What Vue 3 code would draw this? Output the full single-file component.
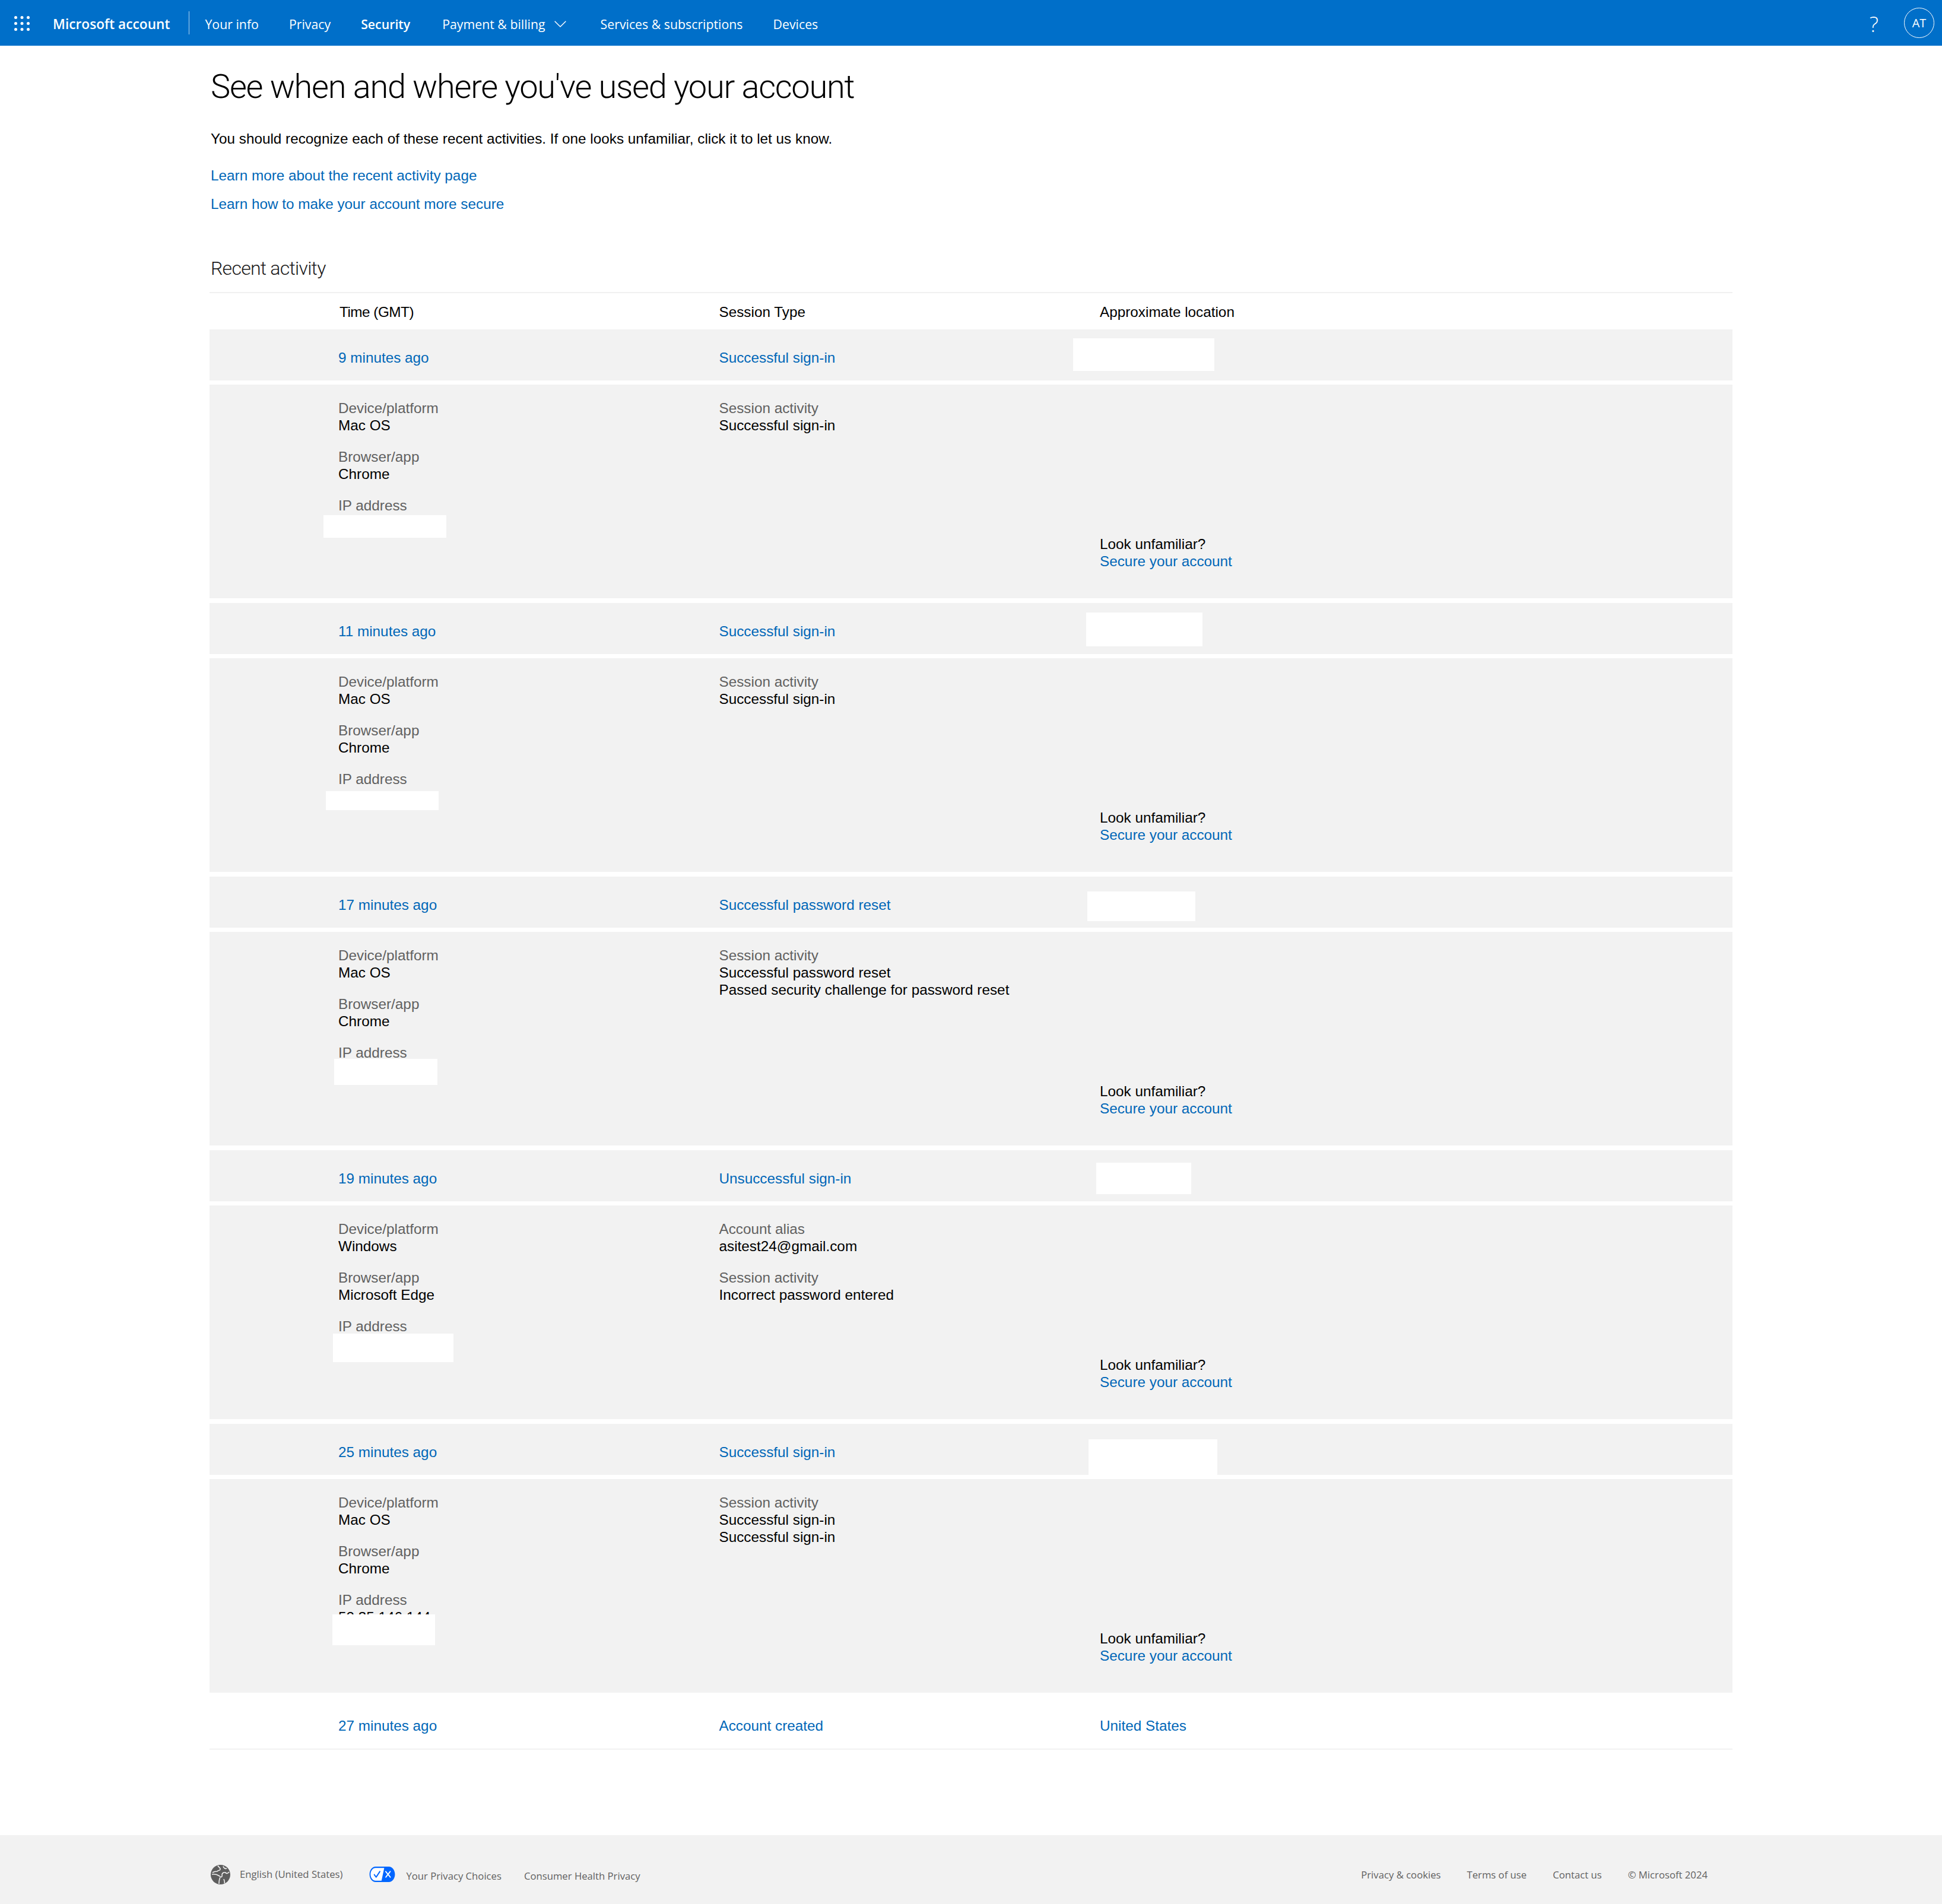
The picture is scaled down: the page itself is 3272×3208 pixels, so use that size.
<template>
  <div class="page">
    <header class="topbar">
      <svg class="waffle" viewBox="0 0 26 25" width="26" height="25" fill="#fff">
        <template v-for="y in [2.5, 12.5, 22.5]" :key="y">
          <circle v-for="x in [2.5, 13, 23.5]" :key="x" :cx="x" :cy="y" r="2.5" />
        </template>
      </svg>
      <span class="brand">Microsoft account</span>
      <span class="divider"></span>
      <nav class="nav">
        <a class="nav-link">Your info</a>
        <a class="nav-link">Privacy</a>
        <a class="nav-link active">Security</a>
        <a class="nav-link billing">
          Payment &amp; billing
          <svg viewBox="0 0 18 10" width="20" height="11" fill="none" stroke="#fff" stroke-width="1.3"><path d="M.5.7 9 9l8.500-8.300" /></svg>
        </a>
        <a class="nav-link services">Services &amp; subscriptions</a>
        <a class="nav-link">Devices</a>
      </nav>
      <span class="help">?</span>
      <span class="avatar">AT</span>
    </header>

    <main class="content">
      <div class="intro">
        <h1>See when and where you've used your account</h1>
        <p class="lead">You should recognize each of these recent activities. If one looks unfamiliar, click it to let us know.</p>
        <a class="link learn-1">Learn more about the recent activity page</a>
        <a class="link learn-2">Learn how to make your account more secure</a>
        <h2>Recent activity</h2>
      </div>

      <div class="table-head">
        <span class="time-head">Time (GMT)</span>
        <span>Session Type</span>
        <span>Approximate location</span>
      </div>

      <section v-for="a in activities" :key="a.time" class="activity">
        <div class="row">
          <a class="link">{{ a.time }}</a>
          <a class="link">{{ a.type }}</a>
        </div>
        <div class="detail">
          <div class="col">
            <div class="group"><div class="label">Device/platform</div><div>{{ a.device }}</div></div>
            <div class="group"><div class="label">Browser/app</div><div>{{ a.browser }}</div></div>
            <div class="group"><div class="label">IP address</div><div>{{ a.ip }}</div></div>
          </div>
          <div class="col">
            <div v-for="g in a.session" :key="g.label" class="group">
              <div class="label">{{ g.label }}</div>
              <div v-for="(v, i) in g.values" :key="i">{{ v }}</div>
            </div>
          </div>
          <div class="unfamiliar">
            <div>Look unfamiliar?</div>
            <a class="link">Secure your account</a>
          </div>
        </div>
        <i v-for="(b, i) in a.masks" :key="i" class="mask" :style="{ left: b[0] + 'px', top: b[1] + 'px', width: b[2] + 'px', height: b[3] + 'px' }"></i>
      </section>

      <div class="row last">
        <a class="link">27 minutes ago</a>
        <a class="link">Account created</a>
        <a class="link">United States</a>
      </div>
    </main>

    <footer class="footer">
      <div class="foot-left">
        <svg class="globe" viewBox="0 0 33 33" width="33" height="33">
          <circle cx="16.5" cy="16.5" r="16.5" fill="#5e5e5e" />
          <g fill="none" stroke="#f2f2f2" stroke-width="1.6">
            <path d="M12 1.5C14 5 17 5 16 8c-1 2-4 1-5 3-3 0-5 0-8 2" />
            <path d="M2 16c6-1 10 1 13 3 3 3 5 1 4-2 0-3 3-5 6-4 2 3 4 1 6-1" />
            <path d="M21 2.500c1 3.500 4 4.500 6 3.500" />
            <path d="M16 21c-2 4-2 7-2 11" />
            <path d="M22 24c1 3 2 4 1 7" />
          </g>
        </svg>
        <span class="lang">English (United States)</span>
        <svg class="choices" viewBox="0 0 30 14" width="44" height="26" preserveAspectRatio="none">
          <path fill="#fff" d="M7.4 12.8h6.8l3.1-11.6H7.4C4.2 1.2 1.6 3.8 1.6 7s2.6 5.8 5.8 5.8z" />
          <path fill="#06f" d="M22.6 0H7.4c-3.9 0-7 3.1-7 7s3.1 7 7 7h15.2c3.9 0 7-3.1 7-7s-3.2-7-7-7zm-21 7c0-3.2 2.6-5.8 5.8-5.8h9.9l-3.1 11.6H7.4c-3.2 0-5.8-2.6-5.8-5.8z" />
          <path fill="#fff" d="M24.6 4c.2.2.2.6 0 .8L22.5 7l2.2 2.2c.2.2.2.6 0 .8-.2.2-.6.2-.8 0l-2.2-2.2L19.5 10c-.2.2-.6.2-.8 0-.2-.2-.2-.6 0-.8L20.8 7l-2.2-2.2c-.2-.2-.2-.6 0-.8.2-.2.6-.2.8 0l2.2 2.2L23.8 4c.2-.2.6-.2.8 0z" />
          <path fill="#06f" d="M12.7 4.1c.2.2.3.6.1.8L8.6 9.8c-.1.1-.2.2-.3.2-.2.1-.5.1-.7-.1L5.4 7.7c-.2-.2-.2-.6 0-.8.2-.2.6-.2.8 0L8 8.6l3.8-4.5c.2-.2.6-.2.9 0z" />
        </svg>
        <a class="foot-low">Your Privacy Choices</a>
        <a class="foot-low consumer">Consumer Health Privacy</a>
      </div>
      <div class="foot-right">
        <a>Privacy &amp; cookies</a>
        <a>Terms of use</a>
        <a>Contact us</a>
        <span>© Microsoft 2024</span>
      </div>
    </footer>
  </div>
</template>

<script setup>
const signIn = [{ label: 'Session activity', values: ['Successful sign-in'] }]
// masks: left, top, width, height, measured from the top left of each activity
const activities = [
  { time: '9 minutes ago', type: 'Successful sign-in', device: 'Mac OS', browser: 'Chrome', ip: '52.35.146.144', session: signIn,
    masks: [[1455, 15, 238, 55], [192, 313, 207, 38]] },
  { time: '11 minutes ago', type: 'Successful sign-in', device: 'Mac OS', browser: 'Chrome', ip: '52.35.146.144', session: signIn,
    masks: [[1477, 16, 196, 57], [196, 317, 190, 32]] },
  { time: '17 minutes ago', type: 'Successful password reset', device: 'Mac OS', browser: 'Chrome', ip: '52.35.146.144',
    session: [{ label: 'Session activity', values: ['Successful password reset', 'Passed security challenge for password reset'] }],
    masks: [[1479, 25, 182, 50], [210, 307, 174, 44]] },
  { time: '19 minutes ago', type: 'Unsuccessful sign-in', device: 'Windows', browser: 'Microsoft Edge', ip: '52.35.146.144',
    session: [{ label: 'Account alias', values: ['asitest24@gmail.com'] }, { label: 'Session activity', values: ['Incorrect password entered'] }],
    masks: [[1494, 21, 160, 53], [208, 309, 203, 48]] },
  { time: '25 minutes ago', type: 'Successful sign-in', device: 'Mac OS', browser: 'Chrome', ip: '52.35.146.144',
    session: [{ label: 'Session activity', values: ['Successful sign-in', 'Successful sign-in'] }],
    masks: [[1481, 26, 217, 62], [207, 321, 173, 52]] },
]
</script>

<style scoped>
.page { min-height: 3208px; background: #fff; color: #000; font-family: "Liberation Sans", Arial, sans-serif; font-size: 24.3px; line-height: 29px; }
a { display: block; }

.topbar { display: flex; align-items: center; height: 77px; background: #006fc9; color: #fff; font-family: "Open Sans", "Noto Sans", sans-serif; padding: 0 13px 0 24px; }
.waffle { flex: none; margin-top: 1px; }
.brand { margin-left: 39px; padding-top: 3px; font-size: 22.7px; font-weight: 600; white-space: nowrap; }
.divider { width: 1px; height: 39px; background: rgba(255,255,255,0.7); margin-left: 32px; }
.nav { display: flex; align-items: center; gap: 51px; margin-left: 26px; padding-top: 3px; flex: 1; font-size: 21.3px; }
.nav-link { white-space: nowrap; }
.nav-link.active { font-weight: 600; }
.billing { display: flex; align-items: center; gap: 15px; margin-left: 3px; }
.services { margin-left: 7px; }
.help { font-weight: 300; font-size: 36px; margin-right: 43px; padding-top: 3px; }
.avatar { width: 51px; height: 51px; box-sizing: border-box; border: 1.5px solid #fff; border-radius: 50%; display: flex; align-items: center; justify-content: center; font-size: 20px; }

.content { margin-left: 353px; width: 2566px; }
.intro { padding-left: 2px; padding-top: 34px; }
h1 { margin: 0; font-family: Roboto, "Liberation Sans", sans-serif; font-weight: 300; font-size: 56px; letter-spacing: -1.28px; line-height: 70px; color: #000; }
.lead { margin: 38px 0 0; }
.link { color: #0067b8; }
.learn-1 { margin-top: 33px; }
.learn-2 { margin-top: 19px; }
h2 { margin: 72px 0 0; font-family: Roboto, "Liberation Sans", sans-serif; font-weight: 300; font-size: 32px; letter-spacing: -0.75px; line-height: 44px; color: #1a1a1a; }

.table-head { display: grid; grid-template-columns: 641.5px 641.5px 1fr; padding: 17px 0 15px 217px; margin-top: 18px; border-top: 2px solid #f0f0f0; }
.time-head { padding-left: 2px; letter-spacing: -0.5px; }

.activity { position: relative; margin-bottom: 8px; }
.row { display: grid; grid-template-columns: 641.5px 641.5px 1fr; height: 86px; box-sizing: border-box; padding: 33px 0 0 217px; background: #f2f2f2; margin-bottom: 7px; }
.detail { display: grid; grid-template-columns: 641.5px 641.5px 1fr; height: 360px; box-sizing: border-box; padding: 25px 0 48px 217px; background: #f2f2f2; }
.group { margin-bottom: 24px; }
.label { color: #616161; }
.unfamiliar { align-self: end; }
.mask { position: absolute; background: #fff; }
.last { background: #fff; height: 88px; padding-top: 33px; border-bottom: 2px solid #f2f2f2; margin: 0; }

.footer { display: flex; justify-content: space-between; height: 116px; box-sizing: border-box; margin-top: 144px; padding: 50px 395px 0 355px; background: #f2f2f2; color: #616161; font-family: "Open Sans", "Noto Sans", sans-serif; font-size: 16.7px; line-height: 24px; }
.foot-left { display: flex; align-items: flex-start; }
.globe { flex: none; margin-right: 16px; }
.lang { white-space: nowrap; margin-top: 4px; }
.choices { flex: none; margin: 3px 18px 0 45px; }
.foot-low { white-space: nowrap; margin-top: 7px; }
.consumer { margin-left: 38px; }
.foot-right { display: flex; gap: 44px; padding-top: 5px; white-space: nowrap; }
</style>

<style>
html, body { background: #fff; }
</style>
